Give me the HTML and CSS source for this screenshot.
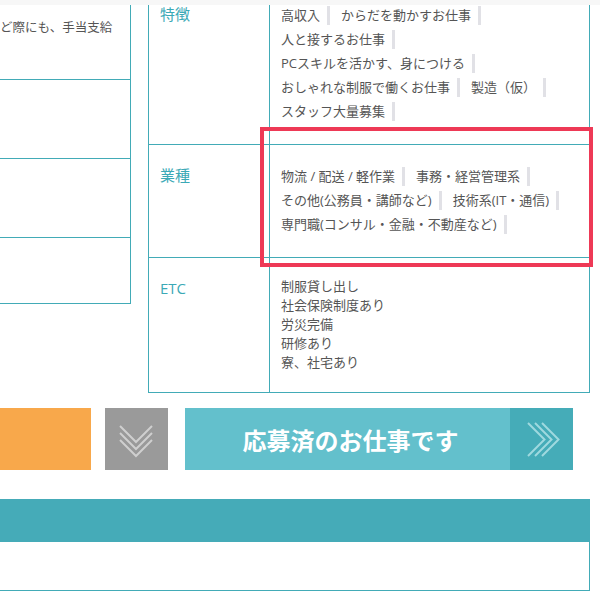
FILE: index.html
```html
<!DOCTYPE html>
<html lang="ja">
<head>
<meta charset="utf-8">
<title>求人詳細</title>
<link rel="stylesheet" href="styles.css">
</head>
<body>
<div class="band"></div>
<div class="page">
  <div class="top">
    <div class="ltable">
      <div class="lrow r1"><p class="ltext">ど際にも、手当支給</p></div>
      <div class="lrow r2"></div>
      <div class="lrow r3"></div>
      <div class="lrow r4"></div>
    </div>
    <div class="rtable">
      <div class="row">
        <div class="label">特徴</div>
        <div class="content">
          <ul class="tags">
            <li>高収入</li>
            <li>からだを動かすお仕事</li>
            <li>人と接するお仕事</li>
            <li>PCスキルを活かす、身につける</li>
            <li>おしゃれな制服で働くお仕事</li>
            <li>製造（仮）</li>
            <li>スタッフ大量募集</li>
          </ul>
        </div>
      </div>
      <div class="row">
        <div class="label">業種</div>
        <div class="content">
          <ul class="tags">
            <li>物流 / 配送 / 軽作業</li>
            <li>事務・経営管理系</li>
            <li>その他(公務員・講師など)</li>
            <li>技術系(IT・通信)</li>
            <li>専門職(コンサル・金融・不動産など)</li>
          </ul>
        </div>
      </div>
      <div class="row">
        <div class="label">ETC</div>
        <div class="content etc">
          <ul class="list">
            <li>制服貸し出し</li>
            <li>社会保険制度あり</li>
            <li>労災完備</li>
            <li>研修あり</li>
            <li>寮、社宅あり</li>
          </ul>
        </div>
      </div>
    </div>
  </div>

  <div class="actions">
    <div class="btn-orange"></div>
    <div class="btn-more">
      <svg width="63" height="62" viewBox="0 0 63 62" aria-hidden="true">
        <g fill="none" stroke="#cfcfcf" stroke-width="2">
          <polyline points="15,18 31,34 47,18"/>
          <polyline points="15,25 31,41 47,25"/>
          <polyline points="15,32 31,48 47,32"/>
        </g>
      </svg>
    </div>
    <div class="btn-applied">
      <span class="btn-text">応募済のお仕事です</span>
      <span class="btn-arrow">
        <svg width="63" height="62" viewBox="0 0 63 62" aria-hidden="true">
          <g fill="none" stroke="#9fd9df" stroke-width="2">
            <polyline points="18,15 34.5,31.5 18,48"/>
            <polyline points="25,15 41.5,31.5 25,48"/>
            <polyline points="32,15 48.5,31.5 32,48"/>
          </g>
        </svg>
      </span>
    </div>
  </div>

  <div class="section">
    <div class="section-head"></div>
    <div class="section-body"></div>
  </div>
</div>
<div class="highlight"></div>
</body>
</html>
```
FILE: styles.css
```css
html, body {
  margin: 0;
  padding: 0;
  background: #ffffff;
}
body {
  width: 600px;
  height: 600px;
  overflow: hidden;
  position: relative;
  font-family: "Open Sans", "Noto Sans CJK JP", sans-serif;
  color: #555555;
}
.band {
  position: absolute;
  left: 0;
  top: 0;
  width: 600px;
  height: 5px;
  background: #f7f7f7;
}
.page {
  margin-top: -16px;
}
.top {
  display: flex;
  align-items: flex-start;
  gap: 17px;
}
.ltable {
  flex: none;
  width: 131px;
  box-sizing: border-box;
  border-right: 1px solid #42abb7;
  overflow: hidden;
}
.lrow {
  box-sizing: border-box;
  border-bottom: 1px solid #42abb7;
}
.r1 { height: 96px; padding-top: 35px; }
.r2 { height: 79px; }
.r3 { height: 79px; }
.r4 { height: 66px; }
.ltext {
  margin: 0;
  white-space: nowrap;
  font-size: 12.5px;
  line-height: 18px;
}
.rtable {
  flex: none;
  width: 442px;
  box-sizing: border-box;
  border-left: 1px solid #42abb7;
  border-right: 1px solid #42abb7;
}
.row {
  display: flex;
  border-bottom: 1px solid #42abb7;
}
.label {
  flex: none;
  width: 121px;
  box-sizing: border-box;
  border-right: 1px solid #42abb7;
  padding: 18px 0 0 11px;
  font-size: 15px;
  line-height: 24px;
  color: #3ba9b6;
}
.content {
  flex: 1;
  min-width: 0;
  padding: 19px 8px 21px 11px;
}
.content.etc {
  padding-bottom: 20px;
}
.tags {
  list-style: none;
  margin: 0;
  padding: 0;
  display: flex;
  flex-wrap: wrap;
  font-size: 13px;
  line-height: 24px;
}
.tags li {
  display: flex;
  align-items: center;
  white-space: nowrap;
}
.tags li::after {
  content: "";
  width: 3px;
  height: 19px;
  background: #e1e1e6;
  margin: 0 11px 0 7px;
}
.list {
  list-style: none;
  margin: 0;
  padding: 0;
  font-size: 13px;
  line-height: 19px;
}
.actions {
  display: flex;
  margin-top: 15px;
  height: 62px;
}
.btn-orange {
  width: 91px;
  background: #f8a84b;
  flex: none;
}
.btn-more {
  width: 63px;
  margin-left: 14px;
  background: #9a9a9a;
  flex: none;
}
.btn-more svg, .btn-arrow svg {
  display: block;
}
.btn-applied {
  width: 388px;
  margin-left: 17px;
  display: flex;
  background: #63c0cc;
  flex: none;
}
.btn-text {
  flex: 1;
  display: flex;
  align-items: center;
  justify-content: center;
  padding-left: 6px;
  color: #ffffff;
  font-size: 24px;
  font-weight: bold;
}
.btn-arrow {
  width: 63px;
  background: #45acb8;
  flex: none;
}
.section {
  margin-top: 29px;
  width: 590px;
}
.section-head {
  height: 43px;
  background: #45abb8;
}
.section-body {
  height: 49px;
  box-sizing: border-box;
  border-right: 1px solid #42abb7;
  border-bottom: 1px solid #42abb7;
}
.highlight {
  position: absolute;
  left: 260px;
  top: 127px;
  width: 333px;
  height: 140px;
  box-sizing: border-box;
  border: 4px solid #ee3956;
}
```
